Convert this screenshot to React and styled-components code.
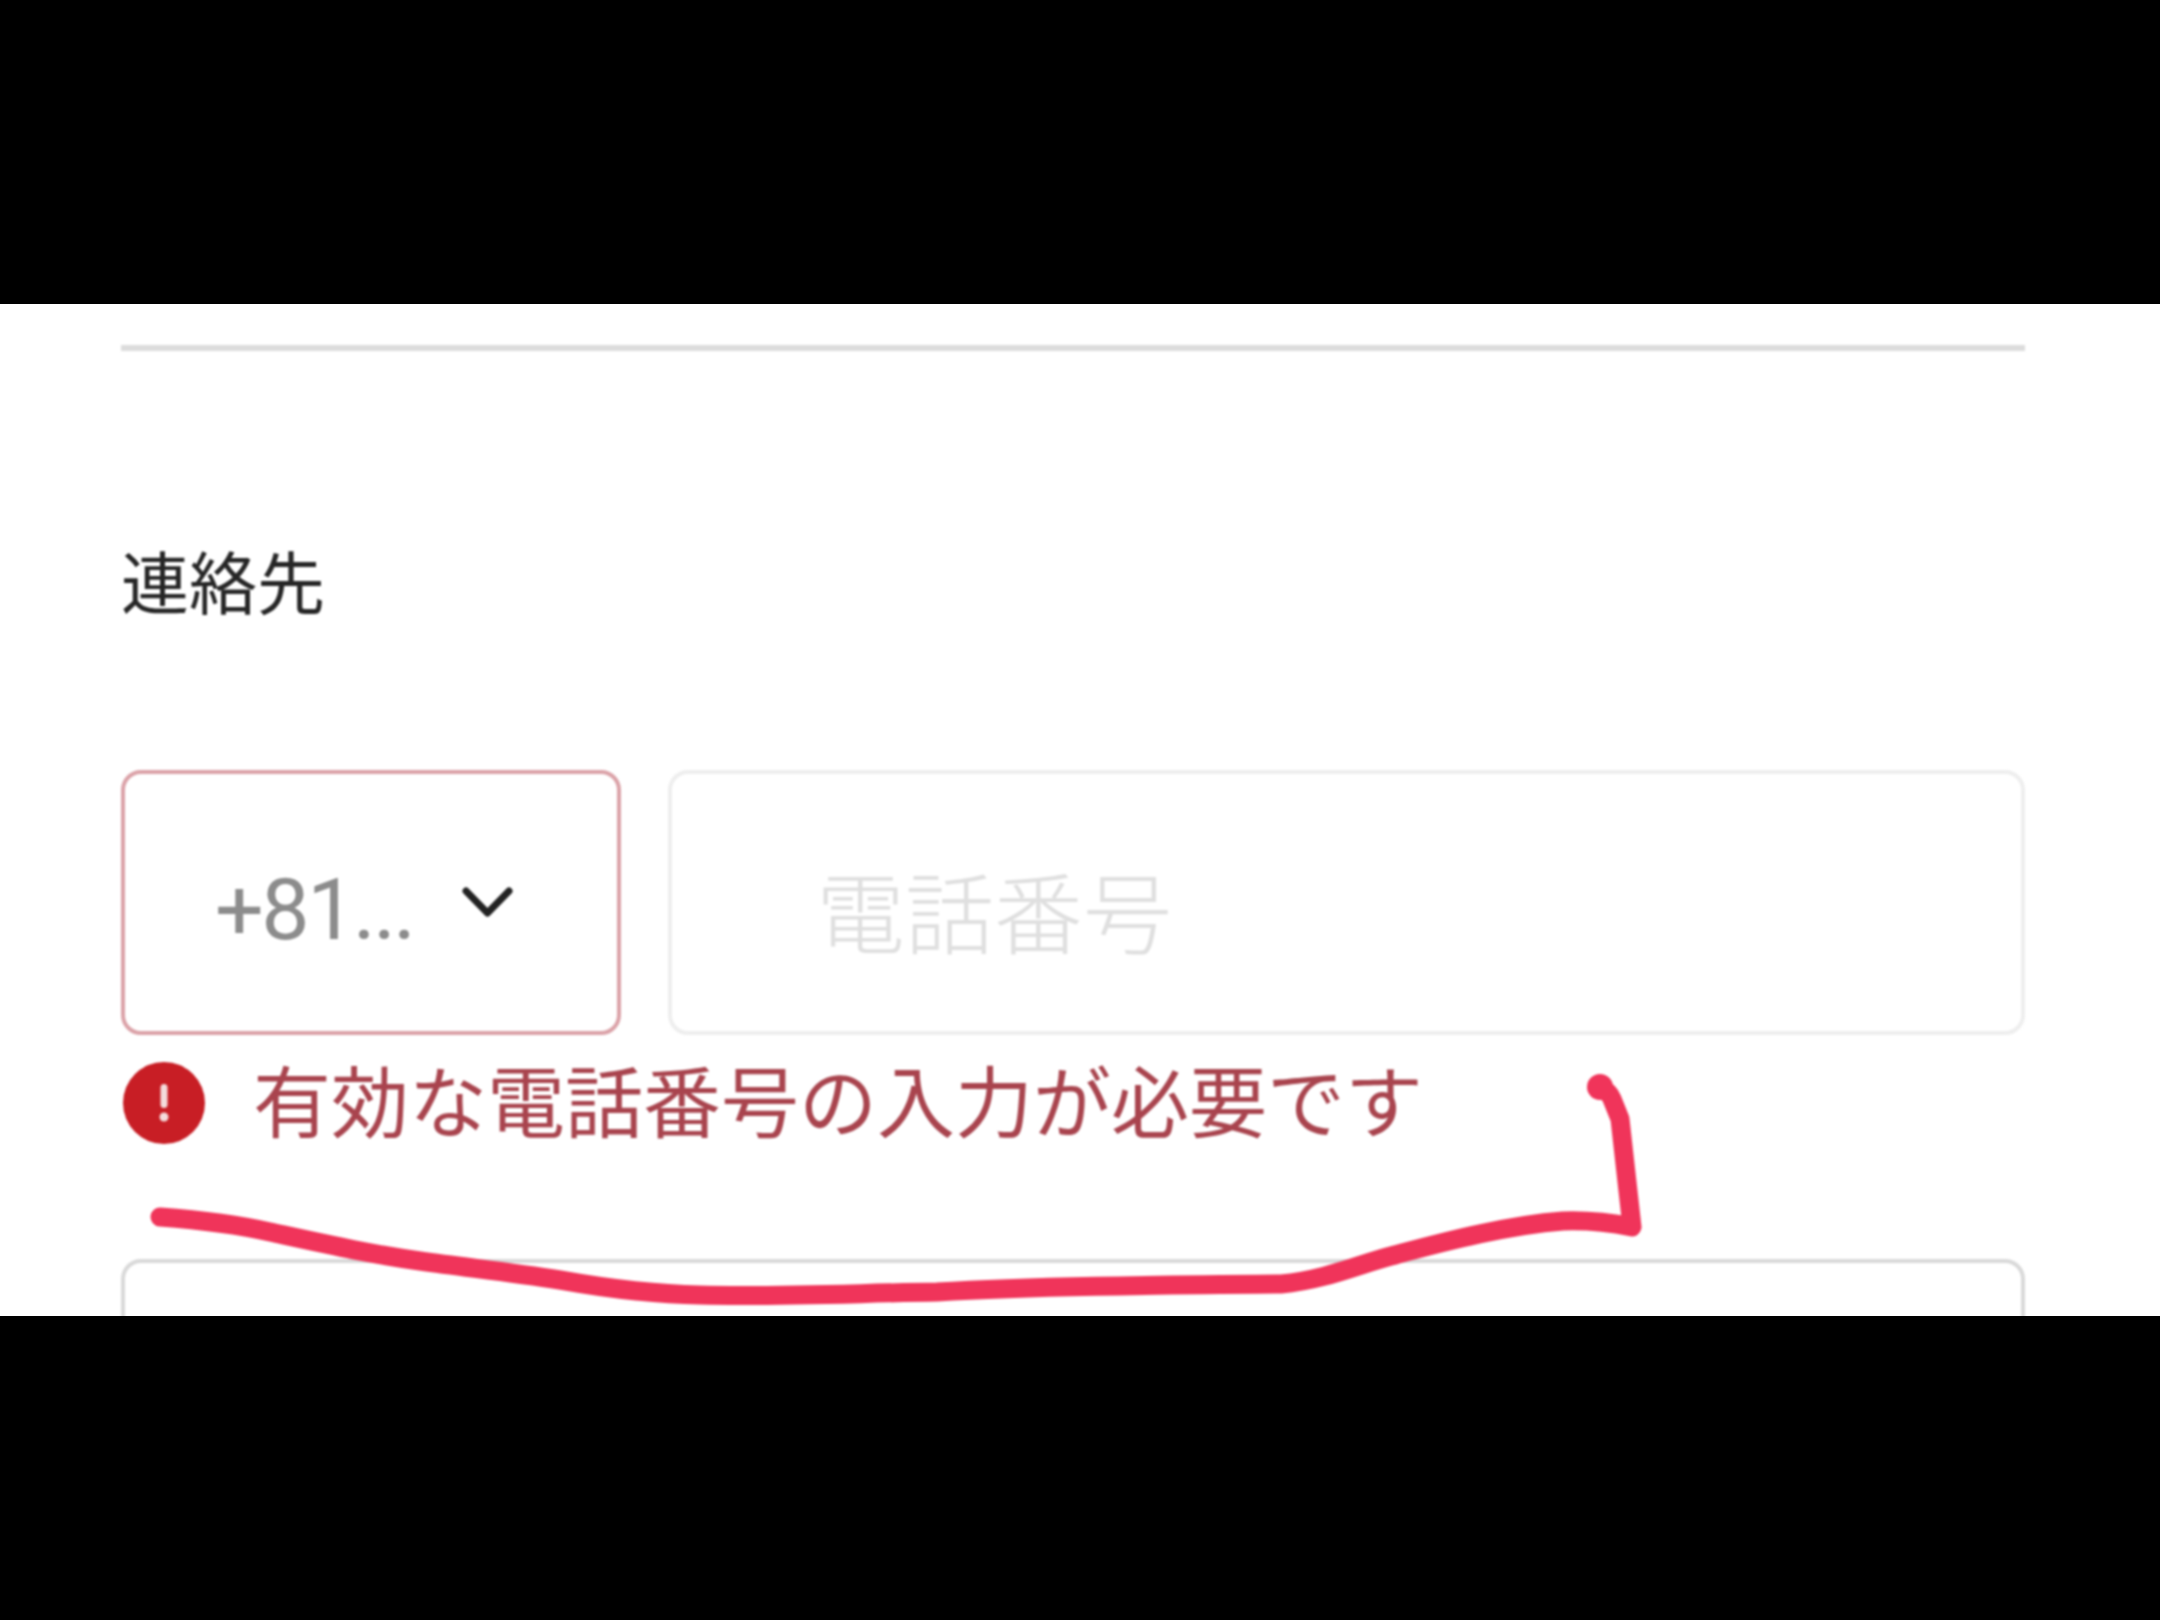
import React from 'react';
import styled, { createGlobalStyle } from 'styled-components';

const GlobalStyle = createGlobalStyle`
  html, body {
    margin: 0;
    padding: 0;
    background: #000;
  }
`;

const fontStack = '"Noto Sans CJK JP", "Noto Sans", sans-serif';

const Page = styled.div`
  width: 2160px;
  height: 1620px;
  padding-top: 304px;
  box-sizing: border-box;
  background: #000;
  overflow: hidden;
`;

const Screen = styled.div`
  position: relative;
  height: 1012px;
  background: #fff;
  overflow: hidden;
`;

// the source is a soft phone photo, so everything inside is slightly blurred
const Content = styled.div`
  position: relative;
  height: 1012px;
  box-sizing: border-box;
  padding: 41px 135px 0 121px;
  font-family: ${fontStack};
  filter: blur(1.2px);
`;

const Divider = styled.div`
  height: 6px;
  background: #dcdcdc;
`;

const SectionLabel = styled.div`
  margin-top: 195px;
  font-size: 68px;
  line-height: 68px;
  color: #262626;
`;

const PhoneRow = styled.div`
  margin-top: 156px;
  display: grid;
  grid-template-columns: 500px 1fr;
  gap: 47px;
`;

const Field = styled.div`
  height: 265px;
  box-sizing: border-box;
  display: flex;
  align-items: center;
  border: 4px solid ${({ $invalid }) => ($invalid ? '#dba2a8' : '#eeeeee')};
  border-radius: 20px;
  background: #fff;
`;

const CodeSelect = styled(Field)`
  padding-left: 90px;
  gap: 47px;
`;

const CodeValue = styled.span`
  padding-top: 14px;
  font-family: Roboto, sans-serif;
  font-weight: 400;
  font-size: 86px;
  line-height: 100px;
  letter-spacing: -2.5px;
  color: #8c8c8c;
`;

const Chevron = styled.svg`
  width: 53px;
  height: 35px;
  flex: none;
`;

const NumberField = styled(Field)`
  padding-left: 144px;
`;

const Placeholder = styled.span`
  padding-top: 12px;
  font-size: 89px;
  font-weight: 300;
  line-height: 100px;
  color: #dfdfdf;
`;

const ErrorRow = styled.div`
  margin-top: 27px;
  display: flex;
  align-items: center;
  gap: 48px;
  padding-left: 2px;
  height: 81px;
`;

const ErrorIcon = styled.svg`
  width: 82px;
  height: 82px;
  flex: none;
`;

const ErrorText = styled.span`
  padding-bottom: 9px;
  font-size: 78px;
  font-weight: 400;
  line-height: 81px;
  color: #a9444e;
`;

const NextField = styled(Field)`
  margin-top: 116px;
  border-color: #d9d9d9;
`;

const Scribble = styled.svg`
  position: absolute;
  left: 0;
  top: 0;
  width: 2160px;
  height: 1012px;
  pointer-events: none;
`;

// hand drawn mark over the screenshot, coordinates are relative to Screen
const scribblePath = 'M160 913 C200 916 235 920 270 928 C330 941 370 950 420 957 '
  + 'C470 964 510 968 560 976 C610 985 650 990 700 991 C780 993 860 989 937 988 '
  + 'C1030 982 1160 981 1281 980 C1325 976 1360 960 1391 952 C1450 936 1510 921 1563 917 '
  + 'C1590 916 1612 919 1632 923 L1620 815 L1612 795 C1610 790 1606 786 1600 783';

const App = () => (
  <Page>
    <GlobalStyle />
    <Screen>
      <Content>
        <Divider />
        <SectionLabel>連絡先</SectionLabel>
        <PhoneRow>
          <CodeSelect $invalid>
            <CodeValue>+81...</CodeValue>
            <Chevron viewBox="0 0 53 35">
              <polyline
                points="5,6 26.5,28 48,6"
                fill="none"
                stroke="#222"
                strokeWidth="7"
                strokeLinecap="round"
                strokeLinejoin="round"
              />
            </Chevron>
          </CodeSelect>
          <NumberField>
            <Placeholder>電話番号</Placeholder>
          </NumberField>
        </PhoneRow>
        <ErrorRow>
          <ErrorIcon viewBox="0 0 82 82">
            <circle cx="41" cy="41" r="41" fill="#c81e25" />
            <rect x="37.5" y="22" width="7" height="24" rx="3.5" fill="#f4dcdc" />
            <circle cx="41" cy="55" r="4.5" fill="#f4dcdc" />
          </ErrorIcon>
          <ErrorText>有効な電話番号の入力が必要です</ErrorText>
        </ErrorRow>
        <NextField />
        <Scribble viewBox="0 0 2160 1012">
          <path
            d={scribblePath}
            fill="none"
            stroke="#f0345a"
            strokeWidth="19"
            strokeLinecap="round"
            strokeLinejoin="round"
          />
          <circle cx="1600" cy="783" r="13" fill="#f0345a" />
        </Scribble>
      </Content>
    </Screen>
  </Page>
);

export default App;
